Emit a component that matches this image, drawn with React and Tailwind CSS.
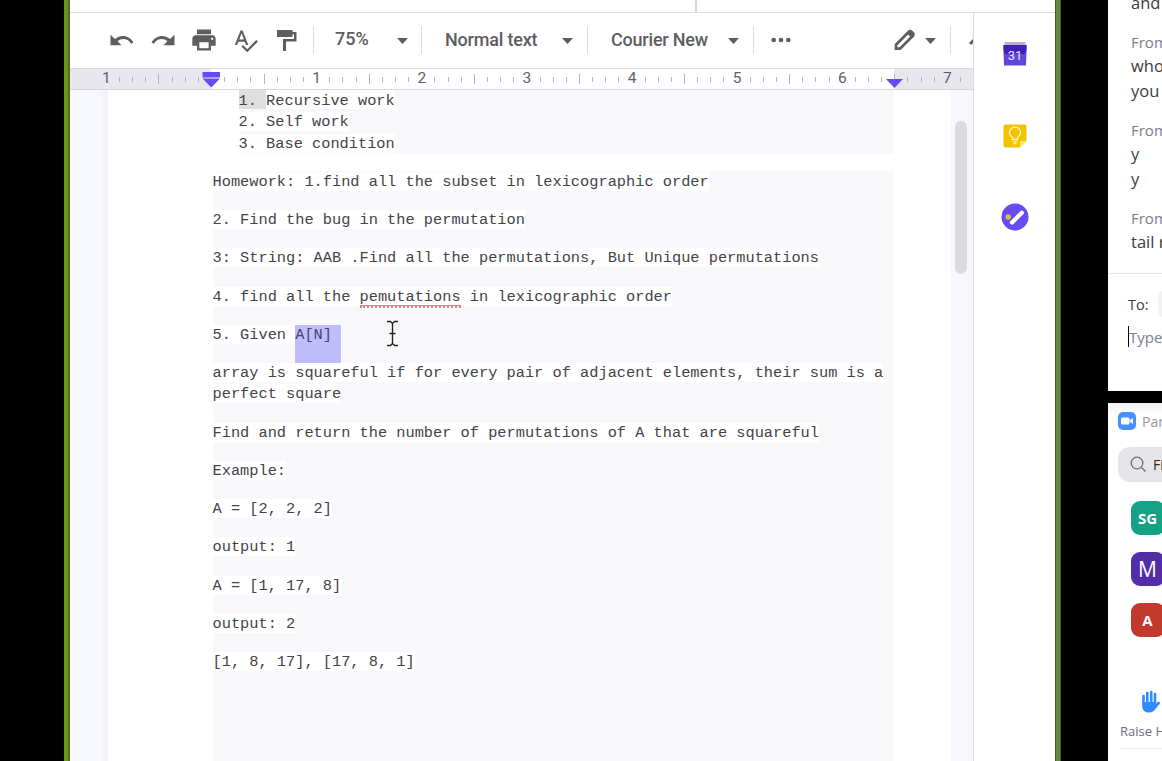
import React from "react";
import { MdPrint, MdSpellcheck } from "react-icons/md";

const rulerCells = Array.from({ length: 66 }, (_, i) => i);
const rulerLabel = (i) => (i === 0 ? "1" : String(i / 8 - 1));

function Ruler() {
  return (
    <div className="relative h-[21px] shrink-0 overflow-hidden border-b border-[#d6d6da] bg-[linear-gradient(90deg,#e8e7ed_141px,#ffffff_141px,#ffffff_824px,#e8e7ed_824px)]">
      <div className="flex h-[20px] w-[900px] items-center pl-[29.8px]">
        {rulerCells.map((i) => (
          <div key={i} className="flex w-[13.145px] shrink-0 items-center justify-center">
            {i % 8 === 0 ? (
              <span className="font-[Roboto] text-[15.5px] leading-none text-[#606065]">{i === 8 ? "" : rulerLabel(i)}</span>
            ) : i % 4 === 0 ? (
              <span className="h-[10px] w-px bg-[#b4b4ba]" />
            ) : (
              <span className="h-[5px] w-px bg-[#b4b4ba]" />
            )}
          </div>
        ))}
      </div>
      <svg className="absolute left-[132px] top-[3px]" width="18" height="16" viewBox="0 0 18 16">
        <path d="M0.5 0h17.5v5.500h-17.500zM0.500 6.500h17.500l-8.700 9z" fill="#664bf5" />
      </svg>
      <svg className="absolute left-[816px] top-[10px]" width="17" height="9" viewBox="0 0 17 9">
        <path d="M0 0h17L8.500 9z" fill="#664bf5" />
      </svg>
    </div>
  );
}

function Sep() {
  return <div className="h-[28px] w-px shrink-0 bg-[#dcdce0]" />;
}

function Caret() {
  return (
    <svg className="mt-[2px] shrink-0" width="11" height="6" viewBox="0 0 11 6">
      <path d="M0 0h11L5.500 6z" fill="#5d5d62" />
    </svg>
  );
}

function CurvedArrow({ className }) {
  return (
    <svg className={className} width="24" height="12" viewBox="0 0 24 12">
      <path d="M.5 .8V11.200H11.500L7.600 7.300C11 4.300 17.600 3.800 21 9.700L23.500 8.500C19.600 1.300 11 -.2 5 4.900z" fill="currentColor" />
    </svg>
  );
}

function Toolbar() {
  return (
    <div className="flex h-[56px] shrink-0 items-center overflow-hidden border-b border-[#dcdce0] pb-px text-[#5d5d62]">
      <div className="flex w-[243px] shrink-0 items-center pl-[40px]">
        <CurvedArrow className="shrink-0" />
        <CurvedArrow className="ml-[17px] shrink-0 -scale-x-100" />
        <MdPrint className="ml-[15px] size-[28px] shrink-0" />
        <MdSpellcheck className="ml-[14px] size-[27px] shrink-0" />
        <svg className="ml-[18px] shrink-0" width="20" height="21" viewBox="0 0 20 21">
          <path d="M0 0h15.500v2h4v9.500H9V21H6V9h11V4.500h-1.500V7H0z" fill="currentColor" />
        </svg>
      </div>
      <Sep />
      <div className="flex w-[107px] shrink-0 items-center font-[Roboto] text-[18px] font-medium leading-none">
        <span className="-mt-[2px] ml-[21px] w-[62px]">75%</span><Caret />
      </div>
      <Sep />
      <div className="flex w-[165px] shrink-0 items-center font-[Roboto] text-[18px] font-medium leading-none">
        <span className="ml-[23px] w-[117px] shrink-0 tracking-[-0.2px]">Normal text</span><Caret />
      </div>
      <Sep />
      <div className="flex w-[165px] shrink-0 items-center font-[Roboto] text-[18px] font-medium leading-none">
        <span className="ml-[23px] w-[117px] shrink-0 tracking-[-0.2px]">Courier New</span><Caret />
      </div>
      <Sep />
      <div className="flex w-[196px] shrink-0 items-center">
        <svg className="ml-[16.500px]" width="20" height="6" viewBox="0 0 20 6" fill="currentColor">
          <circle cx="2.700" cy="3" r="2.300" /><circle cx="10" cy="3" r="2.300" /><circle cx="17.300" cy="3" r="2.300" />
        </svg>
        <svg className="ml-[103px]" width="22" height="22" viewBox="0 0 22 22">
          <path d="M2 15.700L14.700 3l4 4L6 19.700H2z" fill="none" stroke="currentColor" strokeWidth="2.700" />
          <path d="M12.500 4l3-3c1.200-1.200 6.500 3 5 5L17.500 9z" fill="currentColor" />
        </svg>
        <div className="ml-[9.500px]"><Caret /></div>
      </div>
      <Sep />
      <svg className="ml-[18px] shrink-0" width="16" height="12" viewBox="0 0 16 12">
        <path d="M1 10l7-7 7 7" fill="none" stroke="currentColor" strokeWidth="3" />
      </svg>
    </div>
  );
}

function Line({ children, className }) {
  return (
    <div className={className}>
      <span className="block h-[19px] w-fit bg-white leading-[20px]">{children}</span>
    </div>
  );
}

function Doc() {
  return (
    <div className="flex min-h-0 flex-1 bg-[#f7f8fd]">
      <div className="w-[32px] shrink-0" />
      <div className="w-[6px] shrink-0 bg-[#f4f4fa]" />
      <div className="w-[843px] shrink-0 overflow-hidden bg-white pl-[104.500px] font-['Liberation_Mono',monospace] text-[15.320px] whitespace-pre text-[#434348]">
        <div className="ml-[26px] h-[64px] w-[655px] bg-[#f8f7fa]">
          <div className="h-[21px]">
            <span className="flex h-[19px] w-fit bg-white leading-[22px]"><span className="bg-[#dfdfe0]">{"1. "}</span><span>Recursive work</span></span>
          </div>
          <Line className="h-[22px] pt-px">2. Self work</Line>
          <Line className="h-[21px] pt-px">3. Base condition</Line>
        </div>
        <div className="mt-[17px] h-[620px] w-[680px] bg-[#f8f7fa] pt-px">
          <Line className="h-[38px]">Homework: 1.find all the subset in lexicographic order</Line>
          <Line className="h-[38px]">2. Find the bug in the permutation</Line>
          <Line className="h-[39px]">3: String: AAB .Find all the permutations, But Unique permutations</Line>
          <Line className="h-[38px]">4. find all the <span className="border-b-2 border-dotted border-[#e4808a] shadow-[0_-1px_0_#e4808a_inset]">pemutations</span> in lexicographic order</Line>
          <div className="flex h-[38px] leading-[20px]">
            <span className="h-[19px] bg-white">{"5. Given "}</span>
            <span className="h-[38px] w-[46px] bg-[#c0bdfb] text-[#45437a]">A[N]</span>
          </div>
          <Line className="h-[21px]">array is squareful if for every pair of adjacent elements, their sum is a</Line>
          <Line className="h-[39px]">perfect square</Line>
          <Line className="h-[38px]">Find and return the number of permutations of A that are squareful</Line>
          <Line className="h-[38px]">Example:</Line>
          <Line className="h-[38px]">A = [2, 2, 2]</Line>
          <Line className="h-[39px]">output: 1</Line>
          <Line className="h-[38px]">A = [1, 17, 8]</Line>
          <Line className="h-[38px]">output: 2</Line>
          <Line className="h-[38px]">[1, 8, 17], [17, 8, 1]</Line>
        </div>
      </div>
      <div className="flex-1 pl-[4px] pt-[31px]">
        <div className="h-[153px] w-[12px] rounded-full bg-[#dadbdf]" />
      </div>
    </div>
  );
}

function SidePanel() {
  return (
    <div className="flex w-[81px] shrink-0 flex-col items-center border-l border-[#dcdce0] bg-white pl-[2px] pt-[29px]">
      <svg width="24" height="24" viewBox="0 0 24 24">
        <path d="M1.500 0h21v4h-21z" fill="#b9b3c9" />
        <path d="M.5 3h23v7l-.5 13.500H1L.5 10z" fill="#5f49dc" />
        <path d="M.5 3h23v5l-1.500 4H2L.500 8z" fill="#4420b8" />
        <text x="12" y="18" textAnchor="middle" fontFamily="Roboto" fontSize="13" fill="#e9e4ff">31</text>
      </svg>
      <svg className="mt-[57.500px]" width="24" height="24" viewBox="0 0 24 24">
        <path d="M2.500.5h19a2 2 0 0 1 2 2V17L17 23.500H2.500a2 2 0 0 1-2-2v-19a2 2 0 0 1 2-2z" fill="#f3c300" />
        <path d="M17 23.500V17h6.500z" fill="#fbe489" />
        <path d="M9.500 15.500v-2a5.500 5.500 0 1 1 5 0v2zM9.700 17.800h4.600M10.500 19.700h3" fill="none" stroke="#fff3d0" strokeWidth="1.300" />
      </svg>
      <svg className="mt-[55.500px]" width="28" height="28" viewBox="0 0 28 28">
        <circle cx="14" cy="14" r="13.500" fill="#644bf4" />
        <path d="M11 19.500L20.800 9.700" stroke="white" strokeWidth="4.300" strokeLinecap="round" />
        <circle cx="7.200" cy="14" r="2.700" fill="#d8c33a" />
      </svg>
    </div>
  );
}

function Meeting() {
  return (
    <div className="flex w-[54px] shrink-0 flex-col overflow-hidden bg-black font-['Open_Sans','Noto_Sans',sans-serif] whitespace-nowrap">
      <div className="h-[391px] shrink-0 bg-white text-[16.500px] leading-[25px] text-[#3b3b40]">
        <div className="h-[274px] overflow-hidden border-b border-[#e5e5ea] pl-[23px]">
          <div className="-mt-[10px] h-[40px]">and</div>
          <div className="h-[23px] text-[15px] text-[#7b7b92]">From</div>
          <div>who</div>
          <div className="h-[40px]">you</div>
          <div className="h-[23px] text-[15px] text-[#7b7b92]">From</div>
          <div>y</div>
          <div className="h-[40px]">y</div>
          <div className="h-[23px] text-[15px] text-[#7b7b92]">From</div>
          <div>tail recursion</div>
        </div>
        <div className="flex h-[60px] items-center pl-[20px] text-[14.500px]">
          <span className="w-[30px] shrink-0">To:</span>
          <span className="h-[28px] w-[40px] shrink-0 rounded-lg bg-[#f2f2f6]" />
        </div>
        <div className="-mt-[8px] ml-[20px] flex h-[21px] items-center border-l border-black pt-[2px] text-[15px] text-[#7b7b92]">Type</div>
      </div>
      <div className="mt-[12px] flex-1 bg-white">
        <div className="flex h-[36px] items-center bg-[linear-gradient(#f2f2f2,#ffffff_12px)] pl-[10px]">
          <svg width="18" height="18" viewBox="0 0 18 18" className="shrink-0">
            <rect width="18" height="18" rx="5" fill="#4a90fc" />
            <rect x="3" y="5.500" width="8.500" height="7" rx="1.500" fill="white" />
            <path d="M12 8l3-2v6l-3-2z" fill="white" />
          </svg>
          <span className="ml-[6px] text-[14px] text-[#96969b]">Participants</span>
        </div>
        <div className="ml-[10px] mt-[8px] flex h-[35px] w-[90px] items-center rounded-[12px] bg-[#e5e5e8] pl-[12px] text-[14px] text-[#29292e]">
          <svg width="17" height="17" viewBox="0 0 17 17" className="shrink-0">
            <circle cx="7" cy="7" r="5.800" fill="none" stroke="#6c6c80" strokeWidth="1.300" /><path d="M11.500 11.500l4 4" stroke="#6c6c80" strokeWidth="1.300" />
          </svg>
          <span className="ml-[6px]">Find</span>
        </div>
        <div className="ml-[22.500px] mt-[18.500px] flex flex-col gap-[17px] text-white">
          <div className="flex size-[34px] items-center justify-center rounded-[9px] bg-[#16a085] pt-px text-[15px] font-bold">SG</div>
          <div className="flex size-[34px] items-center justify-center rounded-[9px] bg-[#512da8] pt-[2px] text-[21px] font-medium">M</div>
          <div className="flex size-[34px] items-center justify-center rounded-[9px] bg-[#c0392b] pt-[2px] text-[15px] font-bold">A</div>
        </div>
        <svg className="ml-[33px] mt-[53.500px]" width="20" height="23" viewBox="0 0 20 23" fill="none" stroke="#2d8cff" strokeLinecap="round" strokeWidth="2.600">
          <path d="M2.500 13V6M6.300 12V3M10.200 12V2M14 13V4M14 17l3.700-4" />
          <path d="M1.200 12v4c0 4 2.500 6.500 6.500 6.500 4 0 6-2 7.800-5l-1-5.500z" fill="#2d8cff" stroke="none" />
        </svg>
        <div className="ml-[12px] mt-[9px] text-[13px] leading-[18px] text-[#6c6c85]">Raise Hand</div>
        <div className="ml-[13px] mt-[8px] h-px bg-[#e8e8ee]" />
      </div>
    </div>
  );
}

export default function App() {
  return (
    <div className="flex h-[761px] w-[1162px] overflow-hidden bg-black">
      <div className="ml-[64px] flex w-[997px] shrink-0 border-l-4 border-[#6b951f]">
        <div className="w-[2px] shrink-0 bg-[#526d26]" />
        <div className="flex min-w-0 flex-1 flex-col bg-white">
          <div className="flex h-[13px] shrink-0 border-b border-[#dedee1]">
            <div className="w-[625px]" /><div className="w-[2px] bg-[#d9d2d7]" />
          </div>
          <div className="flex min-h-0 flex-1">
            <div className="flex w-[903px] shrink-0 flex-col">
              <Toolbar />
              <Ruler />
              <Doc />
            </div>
            <SidePanel />
          </div>
        </div>
        <div className="w-[6px] shrink-0 border-x border-[#45600f] bg-[#668a42]" />
      </div>
      <div className="w-[47px] shrink-0" />
      <Meeting />
      <svg className="absolute left-[386px] top-[320px]" width="13" height="27" viewBox="0 0 13 27">
        <path d="M1 1.500h3.500l2 2 2-2H12M1 25.500h3.500l2-2 2 2H12M6.500 3v21M3.500 13.500h6" fill="none" stroke="white" strokeWidth="3.500" />
        <path d="M1 1.500h3.500l2 2 2-2H12M1 25.500h3.500l2-2 2 2H12M6.500 3v21M3.500 13.500h6" fill="none" stroke="#222" strokeWidth="1.400" />
      </svg>
    </div>
  );
}
